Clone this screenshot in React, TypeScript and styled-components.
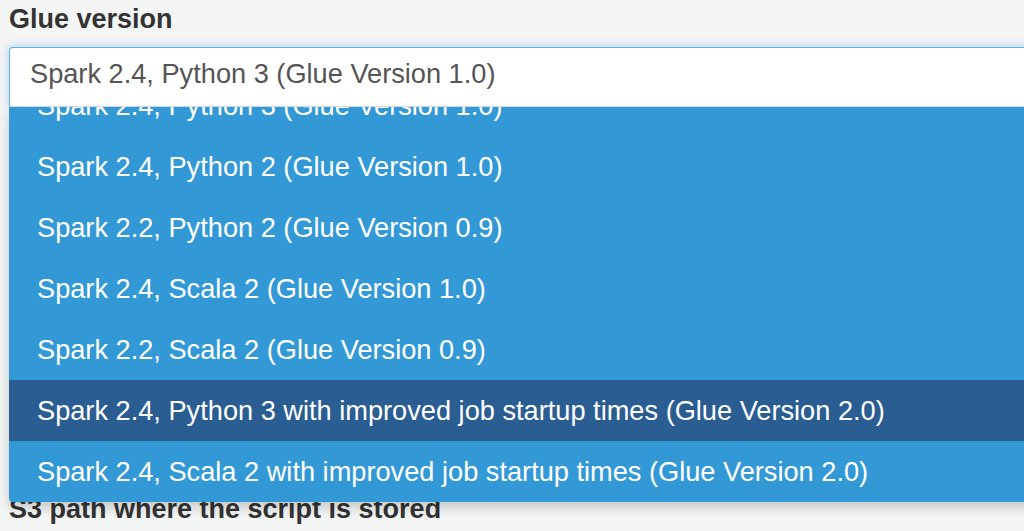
import React from "react";
import styled, { createGlobalStyle } from "styled-components";

const GlobalStyle = createGlobalStyle`
  html, body {
    margin: 0;
    padding: 0;
    background: #f4f5f5;
    overflow: hidden;
  }
  body {
    font-family: "Liberation Sans", Arial, Helvetica, sans-serif;
  }
`;

const Page = styled.div`
  padding: 3px 0 0 9px;
  width: 1100px;
`;

const FieldLabel = styled.label<{ $gap?: number }>`
  display: block;
  font-size: 27px;
  font-weight: 700;
  line-height: 32px;
  color: #333;
  margin-top: ${(p) => p.$gap ?? 0}px;
  margin-bottom: 12px;
  white-space: nowrap;
`;

const SelectWrap = styled.div`
  position: relative;
  width: 1100px;
`;

const SelectBox = styled.div`
  box-sizing: border-box;
  height: 60px;
  display: flex;
  align-items: center;
  padding: 0 20px 6px 20px;
  background: #fff;
  border: 1px solid #66afe9;
  border-bottom-color: #d6dde3;
  border-radius: 4px 4px 0 0;
  box-shadow: 0 0 10px rgba(102, 175, 233, 0.55);
  font-size: 27.2px;
  color: #555;
  white-space: nowrap;
`;

const Menu = styled.div`
  position: absolute;
  top: 100%;
  left: 0;
  right: 0;
  height: 395px;
  overflow: hidden;
  background: #3399d6;
  border-radius: 0 0 4px 4px;
  box-shadow: 0 6px 12px rgba(0, 0, 0, 0.18);
  z-index: 2;
`;

const MenuList = styled.ul`
  list-style: none;
  margin: -32px 0 0 0;
  padding: 0;
`;

const Option = styled.li<{ $active?: boolean }>`
  height: 61px;
  line-height: 61px;
  padding-left: 28px;
  font-size: 27.2px;
  color: #fff;
  white-space: nowrap;
  background: ${(p) => (p.$active ? "#2a5d91" : "transparent")};
`;

const options = [
  "Spark 2.4, Python 3 (Glue Version 1.0)",
  "Spark 2.4, Python 2 (Glue Version 1.0)",
  "Spark 2.2, Python 2 (Glue Version 0.9)",
  "Spark 2.4, Scala 2 (Glue Version 1.0)",
  "Spark 2.2, Scala 2 (Glue Version 0.9)",
  "Spark 2.4, Python 3 with improved job startup times (Glue Version 2.0)",
  "Spark 2.4, Scala 2 with improved job startup times (Glue Version 2.0)",
];

export default function App() {
  return (
    <>
      <GlobalStyle />
      <Page>
        <FieldLabel>Glue version</FieldLabel>
        <SelectWrap>
          <SelectBox>Spark 2.4, Python 3 (Glue Version 1.0)</SelectBox>
          <Menu>
            <MenuList>
              {options.map((o, i) => (
                <Option key={o} $active={i === 5}>
                  {o}
                </Option>
              ))}
            </MenuList>
          </Menu>
        </SelectWrap>
        <FieldLabel $gap={386}>S3 path where the script is stored</FieldLabel>
      </Page>
    </>
  );
}
